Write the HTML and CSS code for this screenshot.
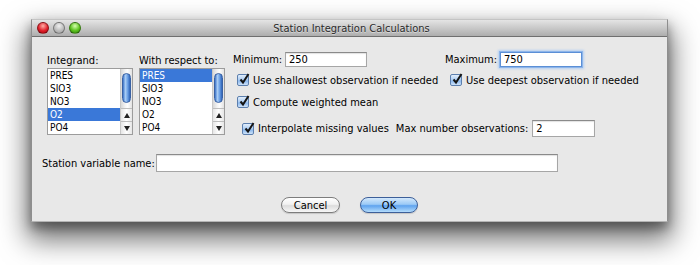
FILE: index.html
```html
<!DOCTYPE html>
<html lang="en">

<head>
    <meta charset="UTF-8">
    <title>Station Integration Calculations</title>
    <link rel="stylesheet" href="styles.css">
</head>

<body>
    <div class="desk">
        <div class="window">
            <div class="titlebar">
                <div class="lights">
                    <span class="light red"></span>
                    <span class="light grey"></span>
                    <span class="light green"></span>
                </div>
                <div class="title">Station Integration Calculations</div>
            </div>
            <div class="content">
                <div class="top">
                    <div class="listgroup">
                        <div class="list-label">Integrand:</div>
                        <div class="listbox">
                            <ul class="items">
                                <li>PRES</li>
                                <li>SIO3</li>
                                <li>NO3</li>
                                <li class="sel">O2</li>
                                <li>PO4</li>
                            </ul>
                            <div class="scrollbar">
                                <div class="track">
                                    <div class="thumb"></div>
                                </div>
                                <div class="arrow"><span class="tri up"></span></div>
                                <div class="arrow"><span class="tri down"></span></div>
                            </div>
                        </div>
                    </div>
                    <div class="listgroup second">
                        <div class="list-label">With respect to:</div>
                        <div class="listbox">
                            <ul class="items">
                                <li class="sel">PRES</li>
                                <li>SIO3</li>
                                <li>NO3</li>
                                <li>O2</li>
                                <li>PO4</li>
                            </ul>
                            <div class="scrollbar">
                                <div class="track">
                                    <div class="thumb"></div>
                                </div>
                                <div class="arrow"><span class="tri up"></span></div>
                                <div class="arrow"><span class="tri down"></span></div>
                            </div>
                        </div>
                    </div>
                    <div class="options">
                        <div class="orow range">
                            <div class="cell">
                                <span class="flabel">Minimum:</span>
                                <div class="field range-field">250</div>
                            </div>
                            <div class="cell">
                                <span class="flabel max">Maximum:</span>
                                <div class="field range-field focus">750</div>
                            </div>
                        </div>
                        <div class="orow checks">
                            <div class="cell check-cell">
                                <span class="checkbox"><svg viewBox="0 0 12 12"><path d="M2.5 6.5 L5 9.5 L10.5 1" /></svg></span>
                                Use shallowest observation if needed
                            </div>
                            <div class="cell check-cell right">
                                <span class="checkbox"><svg viewBox="0 0 12 12"><path d="M2.5 6.5 L5 9.5 L10.5 1" /></svg></span>
                                Use deepest observation if needed
                            </div>
                        </div>
                        <div class="orow checks mean">
                            <div class="cell check-cell">
                                <span class="checkbox"><svg viewBox="0 0 12 12"><path d="M2.5 6.5 L5 9.5 L10.5 1" /></svg></span>
                                Compute weighted mean
                            </div>
                        </div>
                        <div class="orow interp">
                            <span class="checkbox"><svg viewBox="0 0 12 12"><path d="M2.5 6.5 L5 9.5 L10.5 1" /></svg></span>
                            <span>Interpolate missing values</span>
                            <span class="maxlabel">Max number observations:</span>
                            <div class="field count-field">2</div>
                        </div>
                    </div>
                </div>
                <div class="namerow">
                    <span>Station variable name:</span>
                    <div class="field name-field"></div>
                </div>
                <div class="buttons">
                    <div class="btn">Cancel</div>
                    <div class="btn default">OK</div>
                </div>
            </div>
        </div>
    </div>
</body>

</html>
```

FILE: styles.css
```css
* {
    margin: 0;
    padding: 0;
    box-sizing: border-box;
}

html,
body {
    height: 100%;
}

body {
    background-color: #fff;
    font: 11px "DejaVu Sans Condensed", "DejaVu Sans", sans-serif;
    font-stretch: condensed;
    color: #000;
}

.desk {
    height: 100%;
    padding: 19px 0 0 31px;
}

.window {
    width: 637px;
    height: 203px;
    background-color: #e8e8e8;
    border: 1px solid #8e8e8e;
    border-top-color: #c4c4c4;
    border-bottom-color: #b4b4b4;
    box-shadow: 0 14px 26px 4px rgba(0, 0, 0, 0.55), 0 6px 10px rgba(0, 0, 0, 0.35);
    display: flex;
    flex-direction: column;
}

.titlebar {
    height: 17px;
    background: linear-gradient(#e4e4e4, #c6c6c6 55%, #adadad);
    border-bottom: 1px solid #6f6f6f;
    display: flex;
    align-items: center;
}

.lights {
    display: flex;
    gap: 4px;
    padding-left: 5px;
}

.light {
    width: 12px;
    height: 12px;
    border-radius: 50%;
    border: 1px solid rgba(0, 0, 0, 0.35);
}

.light.red {
    background: radial-gradient(circle at 50% 30%, #ffb0a8, #e0202a 55%, #a8000c);
}

.light.grey {
    background: radial-gradient(circle at 50% 30%, #f0f0f0, #bdbdbd 55%, #9a9a9a);
}

.light.green {
    background: radial-gradient(circle at 50% 30%, #d6ffb0, #5bc21e 55%, #2e7e08);
}

.title {
    flex: 1;
    text-align: center;
    color: #2a2a2a;
    margin-right: 45px;
    text-shadow: 0 1px 0 rgba(255, 255, 255, 0.45);
}

.content {
    flex: 1;
    display: flex;
    flex-direction: column;
}

.top {
    display: flex;
    padding: 15px 0 0 15px;
}

.listgroup {
    width: 86px;
    margin-top: 3px;
}

.listgroup.second {
    margin-left: 6px;
}

.list-label {
    height: 13px;
    line-height: 12px;
}

.listbox {
    height: 67px;
    background-color: #fff;
    border: 1px solid #9c9c9c;
    display: flex;
}

.items {
    list-style: none;
    flex: 1;
    font-size: 10px;
}

.items li {
    height: 13px;
    line-height: 13px;
    padding-left: 2px;
}

.items li.sel {
    background-color: #3a78d8;
    color: #fff;
}

.scrollbar {
    width: 12px;
    display: flex;
    flex-direction: column;
    border-left: 1px solid #c8c8c8;
}

.track {
    flex: 1;
    background: linear-gradient(90deg, #d9d9d9, #f4f4f4 40%, #fdfdfd 60%, #e2e2e2);
    padding: 4px 1px 0;
}

.thumb {
    height: 30px;
    border-radius: 5px;
    border: 1px solid #3a62a4;
    background: linear-gradient(90deg, #3d74c9, #a9cdf5 35%, #6ea2e6 65%, #2e63b8);
}

.arrow {
    height: 13px;
    border-top: 1px solid #bdbdbd;
    background: linear-gradient(90deg, #e6e6e6, #fff 50%, #e6e6e6);
    display: flex;
    align-items: center;
    justify-content: center;
}

.tri {
    width: 0;
    height: 0;
    border-left: 3px solid transparent;
    border-right: 3px solid transparent;
}

.tri.up {
    border-bottom: 5px solid #222;
}

.tri.down {
    border-top: 5px solid #222;
}

.options {
    margin-left: 8px;
    flex: 1;
}

.orow {
    display: flex;
    align-items: center;
}

.cell {
    display: flex;
    align-items: center;
}

.cell:first-child {
    width: 212px;
}

.range {
    height: 15px;
}

.flabel {
    width: 52px;
}

.flabel.max {
    width: 55px;
}

.field {
    background-color: #fff;
    border: 1px solid #a6a6a6;
    border-top-color: #8a8a8a;
    box-shadow: inset 0 1px 1px rgba(0, 0, 0, 0.12);
    padding-left: 3px;
    display: flex;
    align-items: center;
}

.range-field {
    width: 82px;
    height: 15px;
}

.field.focus {
    border-color: #5b8fd6;
    box-shadow: 0 0 0 1px #8db5ea, 0 0 2px 2px #b6d0f2;
}

.checks {
    height: 14px;
    margin-top: 6px;
}

.checks.mean {
    margin-top: 8px;
}

.check-cell {
    padding-left: 4px;
    gap: 4px;
}

.check-cell.right {
    padding-left: 5px;
}

.checkbox {
    width: 12px;
    height: 12px;
    border: 1px solid #5c7fae;
    border-radius: 2px;
    background: linear-gradient(#e2eefb, #a9cbf2 50%, #8cb9ee 60%, #cfe3f9);
    position: relative;
    flex: none;
}

.checkbox svg {
    position: absolute;
    left: 0;
    top: -2px;
    width: 12px;
    height: 12px;
    fill: none;
    stroke: #151515;
    stroke-width: 2;
}

.interp {
    height: 17px;
    margin-top: 11px;
    padding-left: 9px;
    gap: 4px;
}

.maxlabel {
    margin-left: 3px;
}

.count-field {
    width: 63px;
    height: 17px;
}

.namerow {
    display: flex;
    align-items: center;
    padding-left: 10px;
    margin-top: 17px;
    gap: 1px;
}

.name-field {
    width: 402px;
    height: 18px;
}

.buttons {
    display: flex;
    justify-content: center;
    gap: 20px;
    margin-top: 25px;
}

.btn {
    width: 59px;
    height: 16px;
    border-radius: 8px;
    border: 1px solid #7d7d7d;
    background: linear-gradient(#ffffff, #f1f1f1 45%, #dcdcdc 55%, #f7f7f7);
    display: flex;
    align-items: center;
    justify-content: center;
    box-shadow: 0 1px 1px rgba(0, 0, 0, 0.15);
}

.btn.default {
    width: 58px;
    border-color: #3d5f99;
    background: linear-gradient(#d3e8fc, #9ccaf6 45%, #5fa3ef 55%, #b4dcfb);
}
```
